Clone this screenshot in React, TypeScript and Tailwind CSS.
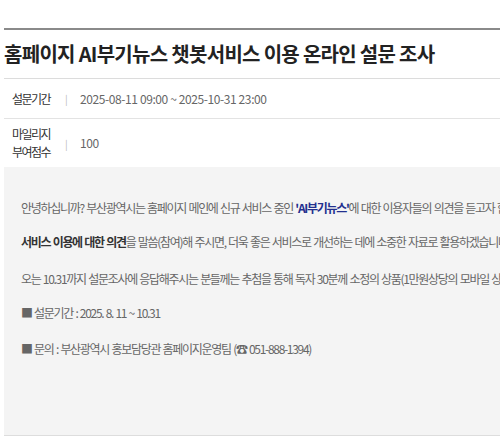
export default function App() {
  const font = { fontFamily: '"Noto Sans CJK KR", "Noto Sans", sans-serif' };
  return (
    <div className="w-[500px] h-[444px] overflow-hidden bg-white" style={font}>
      <div className="pl-1 pt-7">
        <div className="border-t-2 border-[#8a8a8a]">
          <h1 className="h-[48px] flex items-center text-[20px] font-bold text-[#222] tracking-[-0.7px] whitespace-nowrap">
            홈페이지 AI부기뉴스 챗봇서비스 이용 온라인 설문 조사
          </h1>
        </div>
        <div className="border-t border-[#dcdcdc]">
          <div className="flex items-center h-[40px] border-b border-[#e3e3e3] text-[12px]">
            <div className="w-[61px] pl-2 text-[#333] tracking-[-1.5px]">설문기간</div>
            <div className="w-[15px] text-[10px] text-[#bbb]">|</div>
            <div className="text-[#666] tracking-[-0.4px]">2025-08-11 09:00 ~ 2025-10-31 23:00</div>
          </div>
          <div className="flex items-center h-[48px] text-[12px]">
            <div className="w-[61px] pl-2 leading-[18px] text-[#333] tracking-[-1.5px]">
              마일리지
              <br />
              부여점수
            </div>
            <div className="w-[15px] text-[10px] text-[#bbb]">|</div>
            <div className="text-[#666] tracking-[-0.4px]">100</div>
          </div>
        </div>
        <div className="h-[269px] bg-[#f4f4f4] border-b border-[#dddddd] pl-[17px] pt-[32px] text-[12px] text-[#666] tracking-[-1.3px] [word-spacing:1px] whitespace-nowrap overflow-hidden leading-[18px]">
          <p>
            안녕하십니까? 부산광역시는 홈페이지 메인에 신규 서비스 중인{' '}
            <b className="text-[#23308f]">'AI부기뉴스'</b>에 대한 이용자들의 의견을 듣고자 합니다.
          </p>
          <p className="mt-[16px]">
            <b className="text-[#333]">서비스 이용에 대한 의견</b>을 말씀(참여)해 주시면, 더욱 좋은 서비스로 개선하는 데에 소중한 자료로 활용하겠습니다.
          </p>
          <p className="mt-[19px]">
            오는 10.31까지 설문조사에 응답해주시는 분들께는 추첨을 통해 독자 30분께 소정의 상품(1만원상당의 모바일 상품권)을 드립니다.
          </p>
          <p className="mt-[16px]">■ 설문기간 : 2025. 8. 11 ~ 10.31</p>
          <p className="mt-[18px]">■ 문의 : 부산광역시 홍보담당관 홈페이지운영팀 (☎ 051-888-1394)</p>
        </div>
      </div>
    </div>
  );
}
